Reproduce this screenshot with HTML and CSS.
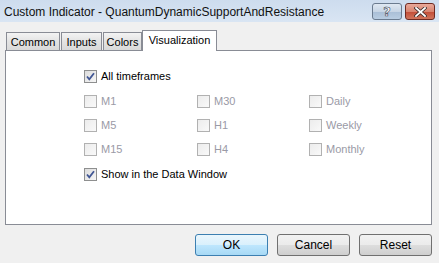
FILE: index.html
```html
<!DOCTYPE html>
<html lang="en">
  <head>
    <meta charset="UTF-8" />
    <meta name="viewport" content="width=device-width, initial-scale=1.0" />
    <title>Custom Indicator</title>
    <link rel="stylesheet" href="styles.css">
  </head>
  <body>
    <div class="window">
      <div class="titlebar">
        <span class="title">Custom Indicator - QuantumDynamicSupportAndResistance</span>
        <div class="caption-buttons">
          <div class="cap-btn help"><span>?</span></div>
          <div class="cap-btn close">
            <svg width="13" height="10" viewBox="0 0 13 10">
              <path d="M2 1 L11 9 M11 1 L2 9" stroke="#3b2b2b" stroke-width="3.4" stroke-linecap="square" />
              <path d="M2 1 L11 9 M11 1 L2 9" stroke="#ffffff" stroke-width="1.8" stroke-linecap="square" />
            </svg>
          </div>
        </div>
      </div>

      <div class="dialog">
        <div class="tabs">
          <div class="tab tab-common">Common</div>
          <div class="tab tab-inputs">Inputs</div>
          <div class="tab tab-colors">Colors</div>
          <div class="tab tab-active">Visualization</div>
        </div>

        <div class="panel">
          <div class="row row-first">
            <span class="check checked"></span><span class="label">All timeframes</span>
          </div>

          <div class="grid">
            <div class="row"><span class="check"></span><span class="label off">M1</span></div>
            <div class="row"><span class="check"></span><span class="label off">M30</span></div>
            <div class="row"><span class="check"></span><span class="label off">Daily</span></div>
            <div class="row"><span class="check"></span><span class="label off">M5</span></div>
            <div class="row"><span class="check"></span><span class="label off">H1</span></div>
            <div class="row"><span class="check"></span><span class="label off">Weekly</span></div>
            <div class="row"><span class="check"></span><span class="label off">M15</span></div>
            <div class="row"><span class="check"></span><span class="label off">H4</span></div>
            <div class="row"><span class="check"></span><span class="label off">Monthly</span></div>
          </div>

          <div class="row row-last">
            <span class="check checked"></span><span class="label">Show in the Data Window</span>
          </div>
        </div>

        <div class="buttons">
          <div class="btn btn-default">OK</div>
          <div class="btn">Cancel</div>
          <div class="btn">Reset</div>
        </div>
      </div>
    </div>
  </body>
</html>
```

FILE: styles.css
```css
body {
  margin: 0;
  background-color: #f0f0f0;
  font-family: "Liberation Sans", Arial, sans-serif;
  font-size: 11px;
  color: #000;
}

.window {
  width: 439px;
  height: 263px;
  overflow: hidden;
}

/* title bar */
.titlebar {
  height: 22px;
  display: flex;
  align-items: center;
  justify-content: space-between;
  padding-left: 4px;
  background: linear-gradient(#cddcee, #d9e5f3);
}

.title {
  font-size: 12px;
  color: #111;
  padding-top: 2px;
}

.caption-buttons {
  display: flex;
  gap: 3px;
  margin-right: 4px;
  margin-top: 1px;
}

.cap-btn {
  height: 15px;
  border: 1px solid #6b7b8f;
  border-radius: 3px;
  display: flex;
  align-items: center;
  justify-content: center;
}

.help {
  width: 28px;
  background: linear-gradient(#dfe8f2 0%, #c7d5e5 50%, #a9bed6 51%, #b9cde2 100%);
}

.help span {
  font-family: "DejaVu Sans", sans-serif;
  font-weight: bold;
  font-size: 13px;
  color: #fff;
  -webkit-text-stroke: 0.6px #3f4b5a;
  line-height: 15px;
}

.close {
  width: 28px;
  border-color: #6e2a22;
  background: linear-gradient(#e9a99b 0%, #d88470 50%, #c24c36 51%, #d0745c 100%);
}

/* dialog body */
.dialog {
  padding: 8px 7px 0 5px;
}

.tabs {
  display: flex;
  align-items: flex-end;
  height: 20px;
  padding-left: 1px;
}

.tab {
  height: 17px;
  box-sizing: border-box;
  height: 18px;
  border: 1px solid #898c95;
  border-bottom: none;
  background: linear-gradient(#f3f3f3, #e3e3e3 50%, #d9d9d9);
  line-height: 18px;
  text-align: center;
}

.tab-common { width: 54px; margin-right: 1px; }
.tab-inputs { width: 41px; margin-right: 1px; }
.tab-colors { width: 39px; }

.tab-active {
  width: 75px;
  height: 21px;
  margin-bottom: -1px;
  background: #fff;
  line-height: 18px;
  position: relative;
  z-index: 1;
}

.panel {
  height: 175px;
  box-sizing: border-box;
  border: 1px solid #898c95;
  background: #fff;
  padding: 13px 0 0 78px;
}

.row {
  height: 24px;
  display: flex;
  align-items: center;
}

.row-first { margin-bottom: 1px; }
.row-last { margin-top: 1px; }

.grid {
  display: grid;
  grid-template-columns: 113px 112px auto;
}

.check {
  width: 13px;
  height: 13px;
  box-sizing: border-box;
  border: 1px solid #b1b1b1;
  background: linear-gradient(135deg, #ececec, #f9f9f9);
  margin-right: 4px;
  flex-shrink: 0;
}

.check.checked {
  border-color: #8e8f8f;
  background:
    url("data:image/svg+xml;utf8,<svg xmlns='http://www.w3.org/2000/svg' width='11' height='11'><path d='M2 5.5 L4.3 8.3 L9 2.2' fill='none' stroke='%23405694' stroke-width='1.8'/></svg>") center / 11px 11px no-repeat,
    linear-gradient(135deg, #dcdcdc, #f6f6f6);
}

.label {
  white-space: nowrap;
}

.label.off {
  color: #9a9aa6;
}

/* bottom buttons */
.buttons {
  display: flex;
  justify-content: flex-end;
  gap: 9px;
  margin-top: 9px;
}

.btn {
  width: 73px;
  height: 22px;
  box-sizing: border-box;
  border: 1px solid #707070;
  border-radius: 3px;
  background: linear-gradient(#f2f2f2 0%, #ebebeb 50%, #dddddd 51%, #cfcfcf 100%);
  display: flex;
  align-items: center;
  justify-content: center;
  font-size: 12px;
}

.btn-default {
  border-color: #3c7fb1;
  background: linear-gradient(#eaf6fd 0%, #d9f0fc 50%, #bee6fd 51%, #a7d9f5 100%);
}
```
